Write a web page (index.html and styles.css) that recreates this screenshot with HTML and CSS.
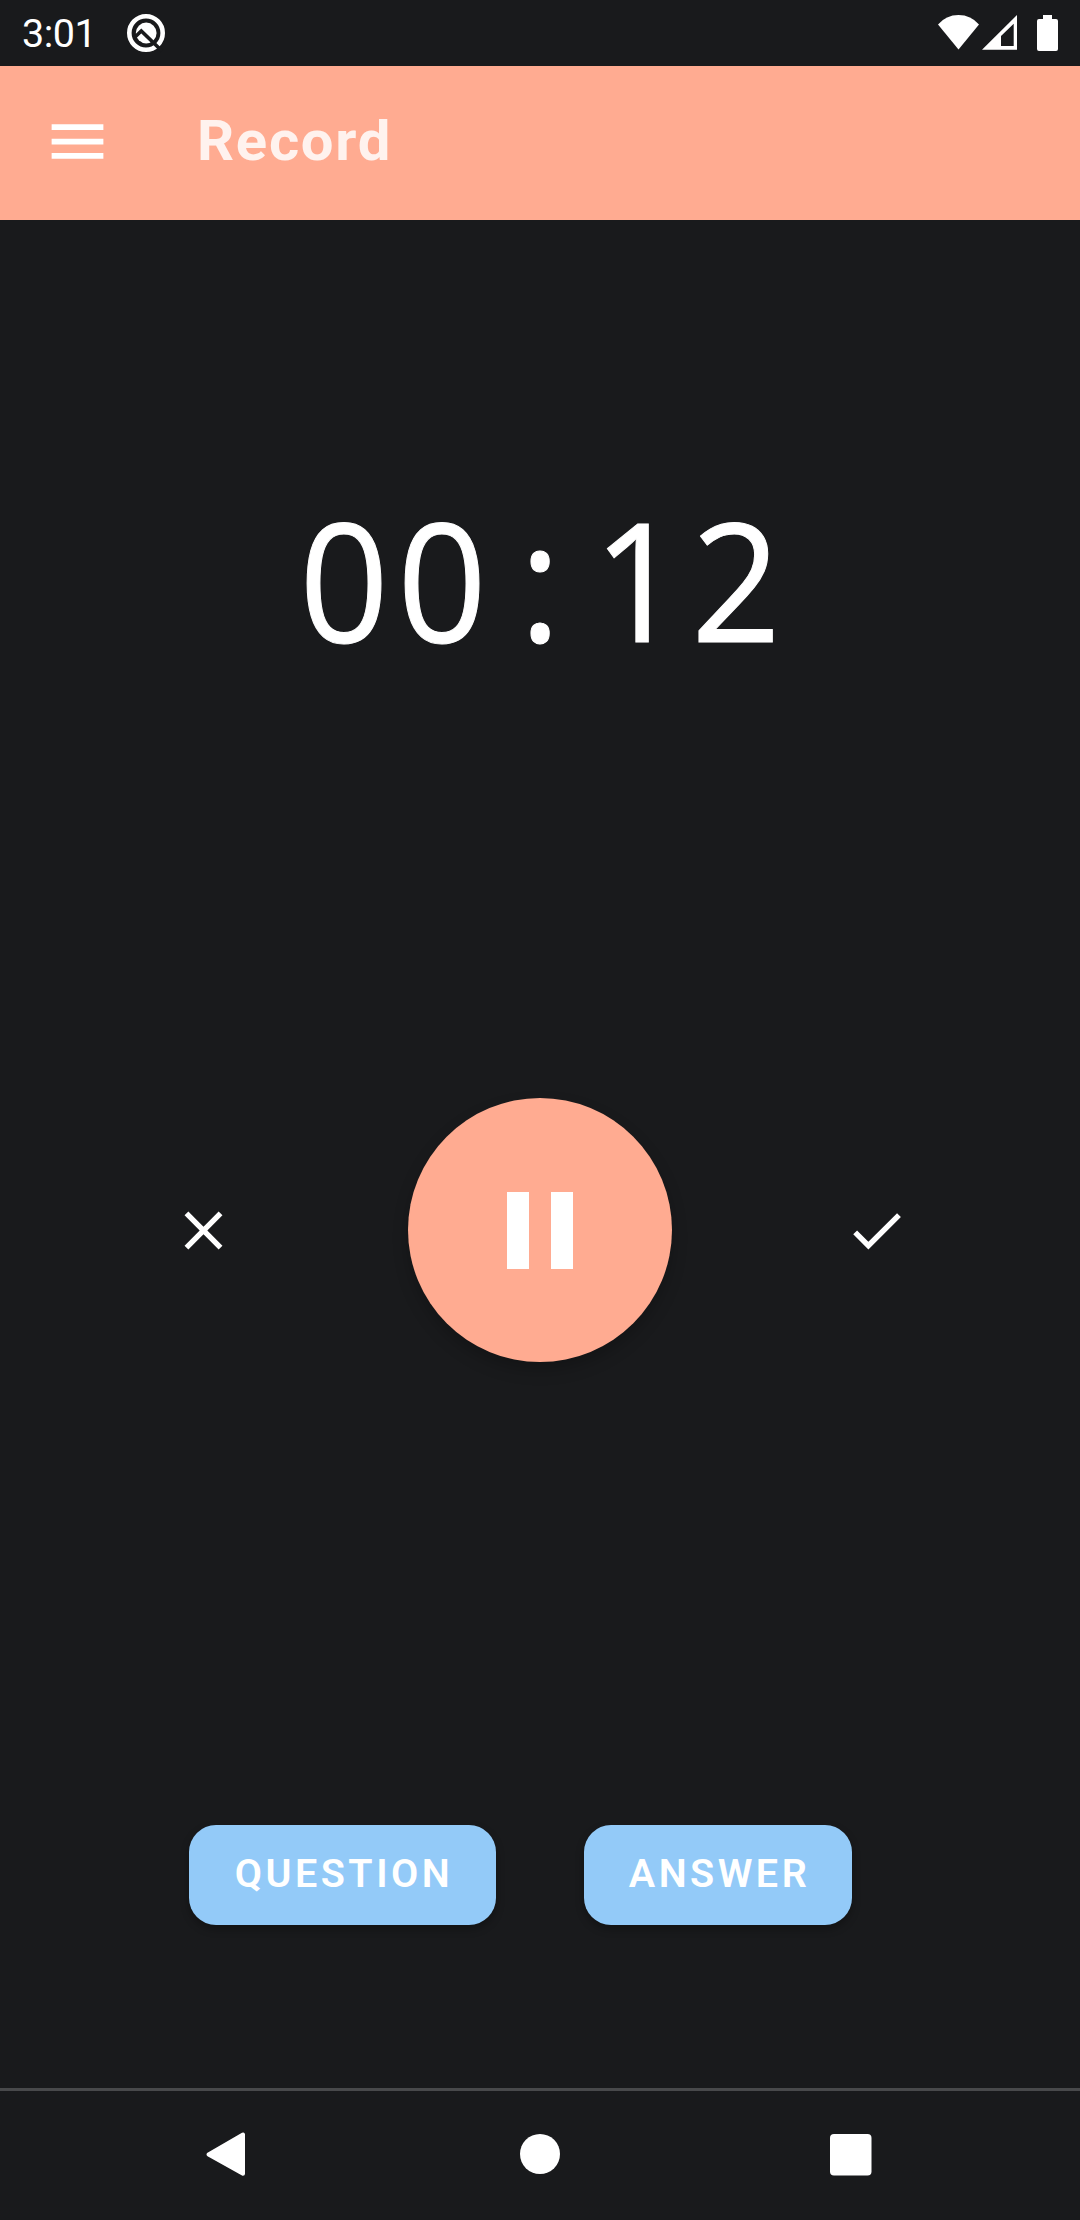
FILE: index.html
```html
<!DOCTYPE html>
<html lang="en">
<head>
<meta charset="utf-8">
<title>Record</title>
<link rel="stylesheet" href="styles.css">
</head>
<body>
<div class="status">
  <span class="clock">3:01</span>
  <svg class="status-q" viewBox="0 0 40 40" fill="none">
    <circle cx="20" cy="20" r="16.7" stroke="#fff" stroke-width="4.6"/>
    <circle cx="20.2" cy="20" r="10.4" fill="#fff"/>
    <path d="M8 25 15.300 18 36 38" stroke="#191a1c" stroke-width="3.600"/>
  </svg>
  <svg class="status-icons" viewBox="0 0 122 38" fill="#fff">
    <path d="M0 10.500Q8 1 20.500 1T41 10.500L20.500 35.500Z"/>
    <path fill-rule="evenodd" d="M44 35.700 79 1V35.700ZM63 32H75.700V9.700L63 22Z"/>
    <path d="M105 1h9v4h4q2 0 2 2v28q0 2-2 2h-17q-2 0-2-2V7q0-2 2-2h4z"/>
  </svg>
</div>
<header class="appbar">
  <svg class="menu" viewBox="0 0 24 24" fill="#fff"><path d="M3 6h18v2H3zM3 11h18v2H3zM3 16h18v2H3z"/></svg>
  <h1 class="title">Record</h1>
</header>
<main class="screen">
  <div class="timer"><span>0</span><span>0</span><span>:</span><span>1</span><span>2</span></div>
  <div class="controls">
    <svg class="icon" viewBox="0 0 24 24" fill="#fff"><path d="M19 6.410 17.590 5 12 10.590 6.410 5 5 6.410 10.590 12 5 17.590 6.410 19 12 13.410 17.590 19 19 17.590 13.410 12z"/></svg>
    <div class="record"><i></i><i></i></div>
    <svg class="icon" viewBox="0 0 24 24" fill="#fff"><path d="M9 16.170 4.830 12 3.410 13.410 9 19 21 7 19.590 5.590z"/></svg>
  </div>
  <div class="actions">
    <div class="button question"><span>QUESTION</span></div>
    <div class="button answer"><span>ANSWER</span></div>
  </div>
</main>
<nav class="navbar">
  <svg viewBox="0 0 46 46" fill="#fff" stroke="#fff" stroke-width="4" stroke-linejoin="round"><path d="M5.500 23.500 40 3.500V42.700Z"/></svg>
  <svg class="home" viewBox="0 0 46 46" fill="#fff"><circle cx="23" cy="23" r="20"/></svg>
  <svg viewBox="0 0 46 46" fill="#fff"><rect x="2" y="3" width="41.500" height="41.500" rx="4"/></svg>
</nav>
</body>
</html>
```
FILE: styles.css
```css
* { box-sizing: border-box; }
body {
  margin: 0;
  width: 1080px;
  height: 2220px;
  display: flex;
  flex-direction: column;
  background: #191a1c;
  color: #fff;
  font-family: Roboto, sans-serif;
}
.status {
  height: 66px;
  display: flex;
  align-items: center;
  padding: 0 20px 0 22px;
}
.clock { width: 104px; font-size: 39.5px; line-height: 66px; padding-top: 2px; letter-spacing: -.5px; }
.status-q { width: 40px; height: 40px; }
.status-icons { width: 122px; height: 38px; margin-left: auto; }
.appbar {
  height: 154px;
  display: flex;
  align-items: center;
  padding-left: 43px;
  background: #ffab91;
}
.menu { width: 69px; height: 69px; margin-top: -4px; }
.title {
  margin: -4px 0 0 85px;
  font-size: 55px;
  line-height: 64px;
  font-weight: 700;
  letter-spacing: 1.6px;
  color: #fff2ee;
  transform: scaleX(1.055);
  transform-origin: left;
}
.screen { flex: 1; display: flex; flex-direction: column; }
.timer {
  display: flex;
  justify-content: center;
  margin-top: 246px;
  height: 225px;
  font-family: "Open Sans", sans-serif;
  font-size: 165px;
  line-height: 225px;
  -webkit-text-stroke: 1px #fff;
}
.timer span { width: 98px; text-align: center; transform: scaleX(.95); }
.controls {
  display: flex;
  align-items: center;
  justify-content: space-between;
  margin-top: 407px;
  padding: 0 171px;
}
.icon { width: 65px; height: 65px; }
.record {
  width: 264px;
  height: 264px;
  border-radius: 50%;
  background: #ffab91;
  display: flex;
  align-items: center;
  justify-content: center;
  gap: 22px;
  box-shadow: 0 8px 16px rgba(0, 0, 0, .22);
}
.record i { width: 22px; height: 77px; background: #fff; }
.actions { display: flex; gap: 88px; margin: 463px 0 0 189px; }
.button {
  height: 100px;
  border-radius: 27px;
  background: #93caf8;
  display: flex;
  align-items: center;
  justify-content: center;
  padding: 0 0 3px 3px;
  font-size: 39.5px;
  font-weight: 600;
  letter-spacing: 3.5px;
  box-shadow: 0 4px 8px rgba(0, 0, 0, .3);
}
.question { width: 307px; }
.answer { width: 268px; }
.navbar {
  height: 132px;
  border-top: 3px solid #48494b;
  display: flex;
  align-items: center;
  justify-content: space-between;
  padding: 0 206px 3px 203px;
}
.navbar svg { width: 46px; height: 46px; }
.navbar .home { margin-left: 3px; }
```
